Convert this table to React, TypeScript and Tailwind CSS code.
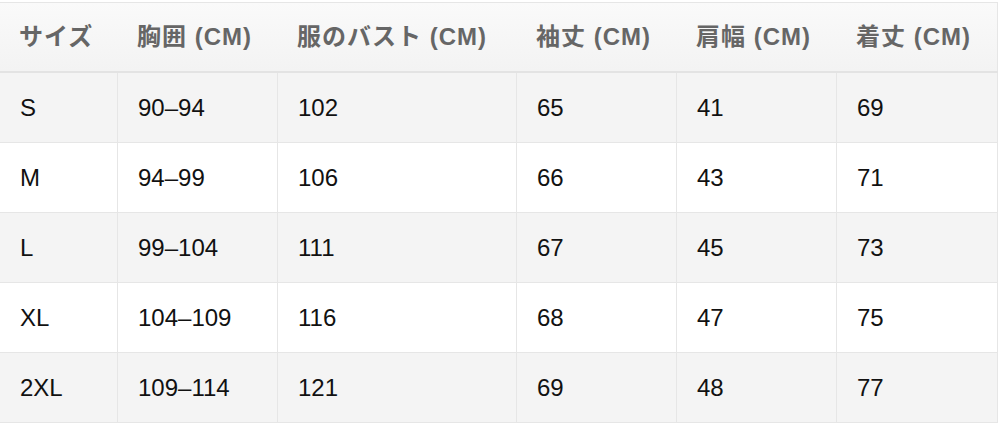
import React from 'react';

const headers = ['サイズ', '胸囲 (CM)', '服のバスト (CM)', '袖丈 (CM)', '肩幅 (CM)', '着丈 (CM)'];

const rows = [
    ['S', '90–94', '102', '65', '41', '69'],
    ['M', '94–99', '106', '66', '43', '71'],
    ['L', '99–104', '111', '67', '45', '73'],
    ['XL', '104–109', '116', '68', '47', '75'],
    ['2XL', '109–114', '121', '69', '48', '77'],
];

const cols = 'grid grid-cols-[118px_160px_239px_160px_160px_161px]';

const App: React.FC = () => {
    return (
        <div
            className="w-[1000px] h-[429px] bg-white pt-[2px]"
            style={{ fontFamily: '"Liberation Sans", "Noto Sans CJK JP", Arial, sans-serif' }}
        >
            <div className="w-[998px] border-t border-[#e6e6e6]">
                <div className={`${cols} h-[70px] bg-linear-to-b from-[#fafafa] to-[#f3f3f3] border-b-2 border-[#e3e3e3]`}>
                    {headers.map((h, i) => (
                        <div
                            key={h}
                            className={`flex items-center pl-[19px] text-[24px] font-bold tracking-[1px] text-[#666666] ${i === 5 ? 'border-r border-[#e6e6e6]' : ''}`}
                        >
                            {h}
                        </div>
                    ))}
                </div>

                {rows.map((r, ri) => (
                    <div
                        key={r[0]}
                        className={`${cols} h-[70px] border-b border-[#e6e6e6] ${ri % 2 === 0 ? 'bg-[#f4f4f4]' : 'bg-white'}`}
                    >
                        {r.map((c, ci) => (
                            <div
                                key={ci}
                                className={`flex items-center pl-[20px] border-r border-[#e6e6e6] text-[24px] text-[#111111] ${ci === 0 ? 'pl-[19px]' : ''}`}
                            >
                                {c}
                            </div>
                        ))}
                    </div>
                ))}
            </div>
        </div>
    );
};

export default App;
